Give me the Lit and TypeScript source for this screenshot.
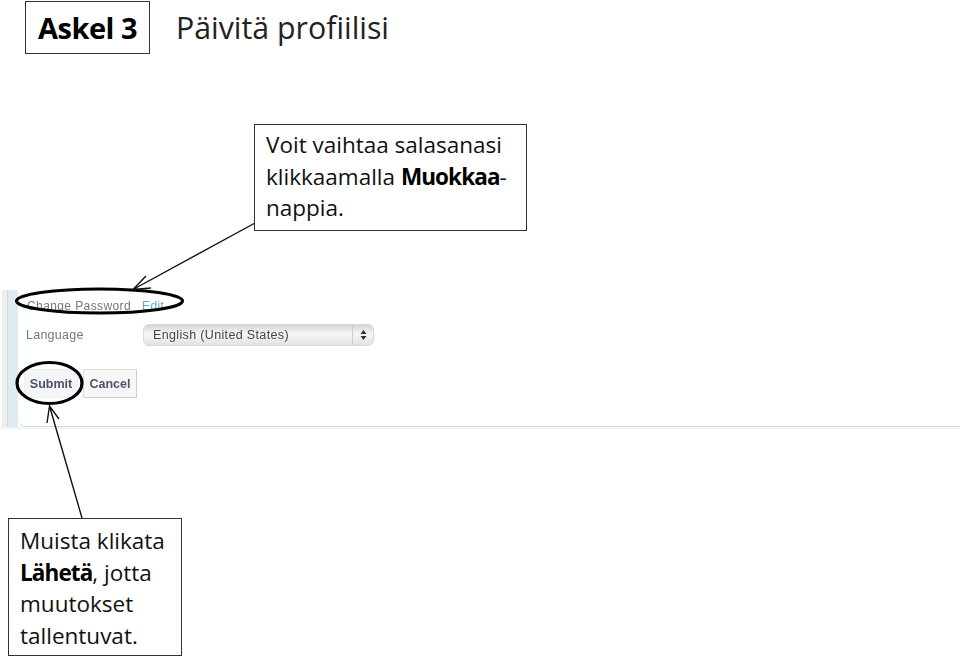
import { LitElement, html, css, svg } from "lit";
import { customElement } from "lit/decorators.js";

@customElement("app-root")
export class AppRoot extends LitElement {
  static styles = css`
    :host {
      display: block;
      position: relative;
      width: 960px;
      height: 659px;
      overflow: hidden;
      background: #fff;
      color: #111;
      font-family: "Open Sans", "Noto Sans", sans-serif;
    }
    .header {
      display: flex;
      align-items: center;
      gap: 26px;
      padding: 1px 0 0 25px;
      height: 53px;
    }
    .step {
      box-sizing: border-box;
      width: 125px;
      height: 53px;
      border: 1px solid #333;
      display: flex;
      align-items: center;
      justify-content: center;
      font-size: 29px;
      font-weight: 700;
      letter-spacing: -0.5px;
      color: #000;
    }
    .title {
      font-size: 30.3px;
      color: #222;
    }
    .shot {
      display: flex;
      margin-top: 236px;
      height: 137px;
      filter: blur(0.5px);
      font-family: "Liberation Sans", sans-serif;
      border-bottom: 2px solid #f0f5f7;
    }
    .rail-grey {
      width: 5px;
      margin-left: 2px;
      background: #eeeeec;
      border-right: 1px solid #d8d8d8;
    }
    .rail-blue {
      width: 10px;
      background: #dcebf4;
    }
    .panel {
      flex: 1;
      box-sizing: border-box;
      background: #fff;
      border-bottom: 1.5px solid #d5dcdc;
      border-bottom-left-radius: 8px;
      padding: 9px 0 0 8px;
      display: flex;
      flex-direction: column;
      font-size: 12px;
      color: #777;
    }
    .pw {
      display: flex;
      gap: 11px;
      height: 14px;
      align-items: center;
      letter-spacing: 0.4px;
      padding-left: 1px;
    }
    .edit {
      color: #4db2dc;
    }
    .lang {
      display: flex;
      align-items: center;
      margin-top: 11px;
      height: 22px;
    }
    .lang-label {
      width: 117px;
      font-size: 12.5px;
      letter-spacing: 0.25px;
    }
    .select {
      box-sizing: border-box;
      width: 231px;
      height: 22px;
      border-radius: 6px;
      background: linear-gradient(#d6d6d6, #f6f6f6 45%, #e2e2e2);
      border: 1px solid #d8d8d8;
      display: flex;
      align-items: center;
      color: #444;
      font-size: 12.5px;
      letter-spacing: 0.35px;
      padding-left: 9px;
    }
    .select-text { flex: 1; }
    .stepper {
      width: 20px;
      height: 100%;
      border-left: 1px solid #ccc;
      display: flex;
      align-items: center;
      justify-content: center;
    }
    .actions {
      display: flex;
      gap: 5px;
      margin: 23px 0 0 -2px;
    }
    .btn {
      box-sizing: border-box;
      width: 54px;
      height: 29px;
      display: flex;
      align-items: center;
      justify-content: center;
      font-size: 12.5px;
      font-weight: 700;
      color: #4c5468;
      background: #f7f7f7;
      border: 1px solid #dedede;
      border-bottom-color: #ccc;
      border-right-color: #ccc;
    }
    .submit { background: #f4f5f7; border-color: #eee; }
    .callout {
      position: absolute;
      box-sizing: border-box;
      background: #fff;
      border: 1.5px solid #333;
      font-size: 22.5px;
      line-height: 31.5px;
      padding-left: 11px;
      color: #111;
    }
    .callout b {
      font-weight: 700;
      letter-spacing: -0.9px;
      color: #000;
    }
    .c1 { left: 254px; top: 124px; width: 273px; height: 107px; padding-top: 4px; }
    .c2 { left: 8px; top: 518px; width: 174px; height: 138px; padding-top: 6px; }
    .overlay {
      position: absolute;
      inset: 0;
      width: 960px;
      height: 659px;
      pointer-events: none;
    }
  `;

  private arrows() {
    return svg`
      <g fill="none" stroke="#111">
        <ellipse cx="99.5" cy="301" rx="83" ry="12" stroke-width="3.2" stroke="#000"/>
        <ellipse cx="49.5" cy="383" rx="32.5" ry="20.5" stroke-width="3.2" stroke="#000"/>
        <path d="M255 223 L133 289.5 M146 276 L133 289.5 L151 288" stroke-width="1.4"/>
        <path d="M82 518 L49.5 406 M47 423 L49.5 406 L59 419" stroke-width="1.4"/>
      </g>
    `;
  }

  render() {
    return html`
      <div class="header">
        <div class="step">Askel 3</div>
        <div class="title">Päivitä profiilisi</div>
      </div>
      <div class="shot">
        <div class="rail-grey"></div>
        <div class="rail-blue"></div>
        <div class="panel">
          <div class="pw"><span>Change Password</span><span class="edit">Edit</span></div>
          <div class="lang">
            <span class="lang-label">Language</span>
            <div class="select">
              <span class="select-text">English (United States)</span>
              <span class="stepper">
                <svg width="7" height="12" viewBox="0 0 7 12"><path d="M3.5 1 L6.5 5 H.5 Z M3.5 11 L.5 7 H6.5 Z" fill="#333"/></svg>
              </span>
            </div>
          </div>
          <div class="actions">
            <div class="btn submit">Submit</div>
            <div class="btn cancel">Cancel</div>
          </div>
        </div>
      </div>
      <svg class="overlay" viewBox="0 0 960 659">${this.arrows()}</svg>
      <div class="callout c1">Voit vaihtaa salasanasi<br />klikkaamalla <b>Muokkaa</b>-<br />nappia.</div>
      <div class="callout c2">Muista klikata<br /><b>Lähetä</b>, jotta<br />muutokset<br />tallentuvat.</div>
    `;
  }
}
